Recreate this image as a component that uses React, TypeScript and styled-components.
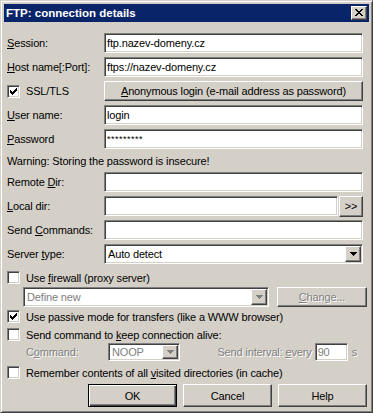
import React from 'react'
import styled, { createGlobalStyle } from 'styled-components'

const GlobalStyle = createGlobalStyle`
  html, body {
    margin: 0;
    padding: 0;
    background: #d4d0c8;
  }
  body {
    font-family: "Liberation Sans", Arial, sans-serif;
    font-size: 11px;
    letter-spacing: -0.15px;
    color: #000;
  }
`

const Check = () => (
  <svg width="7" height="7" viewBox="0 0 7 7" shapeRendering="crispEdges">
    <path
      fill="#000"
      d="M6 0h1v1h-1z M5 1h2v1h-2z M0 2h1v1h-1z M4 2h3v1h-3z M0 3h2v1h-2z M3 3h3v1h-3z M0 4h5v1h-5z M1 5h3v1h-3z M2 6h1v1h-1z"
    />
  </svg>
)

const Arrow = ({ disabled }: { disabled?: boolean }) => (
  <svg width="7" height="4" viewBox="0 0 7 4" shapeRendering="crispEdges">
    <path fill={disabled ? '#808080' : '#000'} d="M0 0h7v1h-7z M1 1h5v1h-5z M2 2h3v1h-3z M3 3h1v1h-1z" />
  </svg>
)

const CloseX = () => (
  <svg width="8" height="7" viewBox="0 0 8 7" shapeRendering="crispEdges">
    <path
      fill="#000"
      d="M0 0h2v1h-2z M6 0h2v1h-2z M1 1h2v1h-2z M5 1h2v1h-2z M2 2h4v1h-4z M3 3h2v1h-2z M2 4h4v1h-4z M1 5h2v1h-2z M5 5h2v1h-2z M0 6h2v1h-2z M6 6h2v1h-2z"
    />
  </svg>
)

const CheckBox = ({ checked, children }: { checked?: boolean; children: React.ReactNode }) => (
  <>
    <Box>{checked && <Check />}</Box>
    <span>{children}</span>
  </>
)

const Combo = ({ value, width, height, disabled }: { value: string; width?: number; height?: number; disabled?: boolean }) => (
  <ComboBox $width={width} $height={height} $disabled={disabled}>
    <ComboText>{value}</ComboText>
    <DropButton $size={(height ?? 20) - 4}>
      <Arrow disabled={disabled} />
    </DropButton>
  </ComboBox>
)

const App = () => {
  return (
    <>
      <GlobalStyle />
      <Window>
        <TitleBar>
          <Title>FTP: connection details</Title>
          <CloseButton>
            <CloseX />
          </CloseButton>
        </TitleBar>

        <Body>
          <FieldGrid>
            <Label><u>S</u>ession:</Label>
            <Edit>ftp.nazev-domeny.cz</Edit>

            <Label><u>H</u>ost name[:Port]:</Label>
            <Edit>ftps://nazev-domeny.cz</Edit>

            <CheckRow>
              <CheckBox checked>SSL/TLS</CheckBox>
            </CheckRow>
            <PushButton>
              <u>A</u>nonymous login (e-mail address as password)
            </PushButton>

            <Label><u>U</u>ser name:</Label>
            <Edit>login</Edit>

            <Label><u>P</u>assword</Label>
            <Edit>
              <Secret>*********</Secret>
            </Edit>

            <Warning>Warning: Storing the password is insecure!</Warning>

            <Label>Remote <u>D</u>ir:</Label>
            <Edit />

            <Label><u>L</u>ocal dir:</Label>
            <FieldWithButton>
              <Edit />
              <BrowseButton>&gt;&gt;</BrowseButton>
            </FieldWithButton>

            <Label>Send <u>C</u>ommands:</Label>
            <Edit />

            <Label>Server <u>t</u>ype:</Label>
            <Combo value="Auto detect" />
          </FieldGrid>

          <CheckRow $mt={7}>
            <CheckBox>Use <u>f</u>irewall (proxy server)</CheckBox>
          </CheckRow>

          <ProxyRow>
            <Combo value="Define new" width={246} disabled />
            <PushButton $width={90} disabled>
              <u>C</u>hange...
            </PushButton>
          </ProxyRow>

          <CheckRow $mt={3}>
            <CheckBox checked>Use passive mode for transfers (like a WWW browser)</CheckBox>
          </CheckRow>

          <CheckRow $mt={5}>
            <CheckBox>Send command to <u>k</u>eep connection alive:</CheckBox>
          </CheckRow>

          <KeepAliveRow>
            <DimLabel $width={82}>C<u>o</u>mmand:</DimLabel>
            <Combo value="NOOP" width={72} height={18} disabled />
            <IntervalGroup>
              <DimLabel>Send interval: <u>e</u>very</DimLabel>
              <Edit $width={33} $height={18} $disabled>90</Edit>
              <DimLabel $unit>s</DimLabel>
            </IntervalGroup>
          </KeepAliveRow>

          <CheckRow $mt={5}>
            <CheckBox>Remember contents of all <u>v</u>isited directories (in cache)</CheckBox>
          </CheckRow>

          <ButtonBar>
            <PushButton $width={89} $height={23} $default>OK</PushButton>
            <PushButton $width={89} $height={23}>Cancel</PushButton>
            <PushButton $width={89} $height={23}>Help</PushButton>
          </ButtonBar>
        </Body>
      </Window>
    </>
  )
}

export default App

const Window = styled.div`
  width: 373px;
  box-sizing: border-box;
  background: #d4d0c8;
  border: 1px solid;
  border-color: #d4d0c8 #404040 #404040 #d4d0c8;
  box-shadow: inset 1px 1px #fff, inset -1px -1px #808080;
  padding: 3px;
`

const TitleBar = styled.div`
  height: 18px;
  background: #0a246a;
  display: flex;
  align-items: center;
  justify-content: space-between;
  padding: 0 2px;
`

const Title = styled.span`
  color: #fff;
  font-weight: bold;
  font-size: 11.5px;
  letter-spacing: 0;
`

const bevel = `
  background: #d4d0c8;
  border: 1px solid;
  border-color: #fff #404040 #404040 #fff;
  box-shadow: inset -1px -1px #808080;
`

const sunken = `
  border: 1px solid;
  border-color: #808080 #fff #fff #808080;
  box-shadow: inset 1px 1px #404040, inset -1px -1px #d4d0c8;
`

const CloseButton = styled.div`
  box-sizing: border-box;
  width: 16px;
  height: 14px;
  ${bevel}
  display: flex;
  align-items: center;
  justify-content: center;
  padding-bottom: 1px;
`

const Body = styled.div`
  padding: 11px 2px 2px 3px;
  display: flex;
  flex-direction: column;
`

const FieldGrid = styled.div`
  display: grid;
  grid-template-columns: 97px 1fr;
  grid-template-rows: repeat(5, 20px) 15px repeat(4, 20px);
  row-gap: 4px;
  margin-right: 4px;
  align-items: center;
`

const Label = styled.span`
  white-space: nowrap;
`

const Warning = styled.span`
  grid-column: 1 / -1;
  white-space: nowrap;
`

const Edit = styled.div<{ $width?: number; $height?: number; $disabled?: boolean }>`
  box-sizing: border-box;
  ${p => (p.$width ? `width: ${p.$width}px; flex: none;` : 'flex: 1;')}
  height: ${p => p.$height ?? 20}px;
  background: #fff;
  ${sunken}
  padding: 0 2px;
  display: flex;
  align-items: center;
  white-space: nowrap;
  overflow: hidden;
  color: ${p => (p.$disabled ? '#808080' : '#000')};
`

const Secret = styled.span`
  font-size: 9px;
  letter-spacing: 0.5px;
`

const FieldWithButton = styled.div`
  display: flex;
  align-items: flex-start;
  gap: 1px;
  height: 20px;
`

const PushButton = styled.div<{ $width?: number; $height?: number; $default?: boolean; disabled?: boolean }>`
  box-sizing: border-box;
  width: ${p => (p.$width ? `${p.$width}px` : 'auto')};
  height: ${p => p.$height ?? 20}px;
  flex: none;
  ${bevel}
  ${p =>
    p.$default &&
    `
    border-color: #000;
    box-shadow: inset 1px 1px #fff, inset -1px -1px #404040, inset -2px -2px #808080;
  `}
  display: flex;
  align-items: center;
  justify-content: center;
  white-space: nowrap;
  color: ${p => (p.disabled ? '#808080' : '#000')};
  text-shadow: ${p => (p.disabled ? '1px 1px 0 #fff' : 'none')};
`

const BrowseButton = styled(PushButton)`
  width: 24px;
  height: 21px;
  padding-bottom: 1px;
`

const ComboBox = styled.div<{ $width?: number; $height?: number; $disabled?: boolean }>`
  box-sizing: border-box;
  ${p => (p.$width ? `width: ${p.$width}px; flex: none;` : '')}
  height: ${p => p.$height ?? 20}px;
  background: #fff;
  ${sunken}
  display: flex;
  align-items: center;
  padding: 1px;
  color: ${p => (p.$disabled ? '#808080' : '#000')};
`

const ComboText = styled.span`
  flex: 1;
  padding-left: 2px;
  white-space: nowrap;
  overflow: hidden;
`

const DropButton = styled.div<{ $size: number }>`
  box-sizing: border-box;
  width: 16px;
  height: ${p => p.$size}px;
  ${bevel}
  display: flex;
  align-items: center;
  justify-content: center;
`

const Box = styled.span`
  box-sizing: border-box;
  width: 13px;
  height: 13px;
  flex: none;
  background: #fff;
  ${sunken}
  display: flex;
  align-items: center;
  justify-content: center;
`

const CheckRow = styled.div<{ $mt?: number }>`
  display: flex;
  align-items: center;
  gap: 6px;
  height: 13px;
  margin-top: ${p => p.$mt ?? 0}px;
  white-space: nowrap;
`

const ProxyRow = styled.div`
  display: flex;
  align-items: center;
  justify-content: space-between;
  height: 20px;
  margin-top: 3px;
  padding-left: 16px;
`

const KeepAliveRow = styled.div`
  display: flex;
  align-items: center;
  height: 18px;
  margin-top: 2px;
  padding: 0 10px 0 19px;
`

const IntervalGroup = styled.div`
  margin-left: auto;
  display: flex;
  align-items: center;
  gap: 3px;
`

const DimLabel = styled.span<{ $width?: number; $unit?: boolean }>`
  ${p => (p.$width ? `width: ${p.$width}px; flex: none;` : '')}
  ${p => (p.$unit ? 'margin-left: 1px;' : '')}
  color: #808080;
  text-shadow: 1px 1px 0 #fff;
  white-space: nowrap;
`

const ButtonBar = styled.div`
  display: flex;
  justify-content: flex-end;
  gap: 6px;
  margin-top: 5px;
`
